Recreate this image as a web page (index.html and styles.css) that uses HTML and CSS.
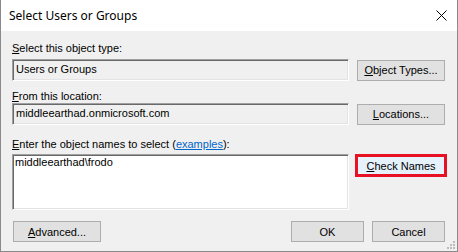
FILE: index.html
```html
<!DOCTYPE html>
<html lang="en">
<head>
    <meta charset="UTF-8">
    <title>Select Users or Groups</title>
    <link rel="stylesheet" href="styles.css">
</head>
<body>
    <div class="window">
        <div class="titlebar">
            <span class="title">Select Users or Groups</span>
            <svg class="close" width="11" height="11" viewBox="0 0 11 11">
                <path d="M0.5 0.5 L10.5 10.5 M10.5 0.5 L0.5 10.5" stroke="#000" stroke-width="1" fill="none"/>
            </svg>
        </div>

        <div class="content">
            <div class="label first"><u>S</u>elect this object type:</div>
            <div class="row">
                <div class="field readonly">Users or Groups</div>
                <button class="btn side"><u>O</u>bject Types...</button>
            </div>

            <div class="label"><u>F</u>rom this location:</div>
            <div class="row">
                <div class="field readonly">middleearthad.onmicrosoft.com</div>
                <button class="btn side"><u>L</u>ocations...</button>
            </div>

            <div class="label third"><u>E</u>nter the object names to select (<a href="#">examples</a>):</div>
            <div class="row top">
                <div class="field names">middleearthad\frodo</div>
                <button class="btn side focused"><u>C</u>heck Names</button>
            </div>

            <div class="footer">
                <button class="btn wide"><u>A</u>dvanced...</button>
                <div class="actions">
                    <button class="btn ok">OK</button>
                    <button class="btn ok">Cancel</button>
                </div>
            </div>
        </div>

        <svg class="grip" width="9" height="9" viewBox="0 0 9 9">
            <rect x="6" y="0" width="2" height="2" fill="#bcbcbc"/>
            <rect x="3" y="3" width="2" height="2" fill="#bcbcbc"/>
            <rect x="6" y="3" width="2" height="2" fill="#bcbcbc"/>
            <rect x="0" y="6" width="2" height="2" fill="#bcbcbc"/>
            <rect x="3" y="6" width="2" height="2" fill="#bcbcbc"/>
            <rect x="6" y="6" width="2" height="2" fill="#bcbcbc"/>
        </svg>
    </div>
</body>
</html>
```

FILE: styles.css
```css
* {
    margin: 0;
    padding: 0;
    box-sizing: border-box;
}

body {
    font-family: "Liberation Sans", Arial, sans-serif;
    font-size: 11px;
    color: #000;
    background: #f0f0f0;
}

.window {
    position: relative;
    width: 458px;
    height: 252px;
    background: #f0f0f0;
    border-left: 1px solid #8a8a8a;
    border-right: 1px solid #8a8a8a;
    border-bottom: 1px solid #8a8a8a;
}

.titlebar {
    height: 31px;
    background: #fff;
    display: flex;
    align-items: center;
    justify-content: space-between;
    padding: 0 10px 0 8px;
}

.title {
    font-family: "Noto Sans", sans-serif;
    font-size: 12px;
    color: #000;
}

.close {
    display: block;
}

.content {
    padding: 0 12px 0 11px;
}

.label {
    line-height: 13px;
    height: 13px;
    margin-top: 9px;
}

.label.first {
    margin-top: 11px;
    margin-bottom: 4px;
}

.label.third {
    margin-top: 13px;
    margin-bottom: 3px;
}

.label a {
    color: #0066cc;
}

.row {
    display: flex;
    align-items: center;
    gap: 8px;
}

.row.top {
    align-items: flex-start;
}

.field {
    flex: 1;
    height: 22px;
    line-height: 18px;
    padding: 0 3px;
    border-top: 1px solid #a0a0a0;
    border-left: 1px solid #a0a0a0;
    border-bottom: 1px solid #fff;
    border-right: 1px solid #fff;
    box-shadow: inset 1px 1px 0 #696969, inset -1px -1px 0 #e3e3e3;
}

.field.readonly {
    background: #f0f0f0;
}

.field.names {
    height: 56px;
    background: #fff;
    padding: 1px 2px;
    line-height: 13px;
}

.btn {
    font-family: "Liberation Sans", Arial, sans-serif;
    font-size: 11px;
    color: #000;
    background: #e1e1e1;
    border: 1px solid #adadad;
    height: 21px;
    cursor: default;
}

.btn.side {
    width: 88px;
}

.btn.focused {
    background: #e5f1fb;
    border: 3px solid #e81123;
    width: 92px;
    height: 23px;
    margin-left: -2px;
    margin-right: -2px;
}

.footer {
    display: flex;
    justify-content: space-between;
    margin-top: 11px;
    padding-left: 1px;
}

.btn.wide {
    width: 88px;
}

.actions {
    display: flex;
    gap: 8px;
}

.btn.ok {
    width: 73px;
}

.grip {
    position: absolute;
    right: 1px;
    bottom: 1px;
}
```
